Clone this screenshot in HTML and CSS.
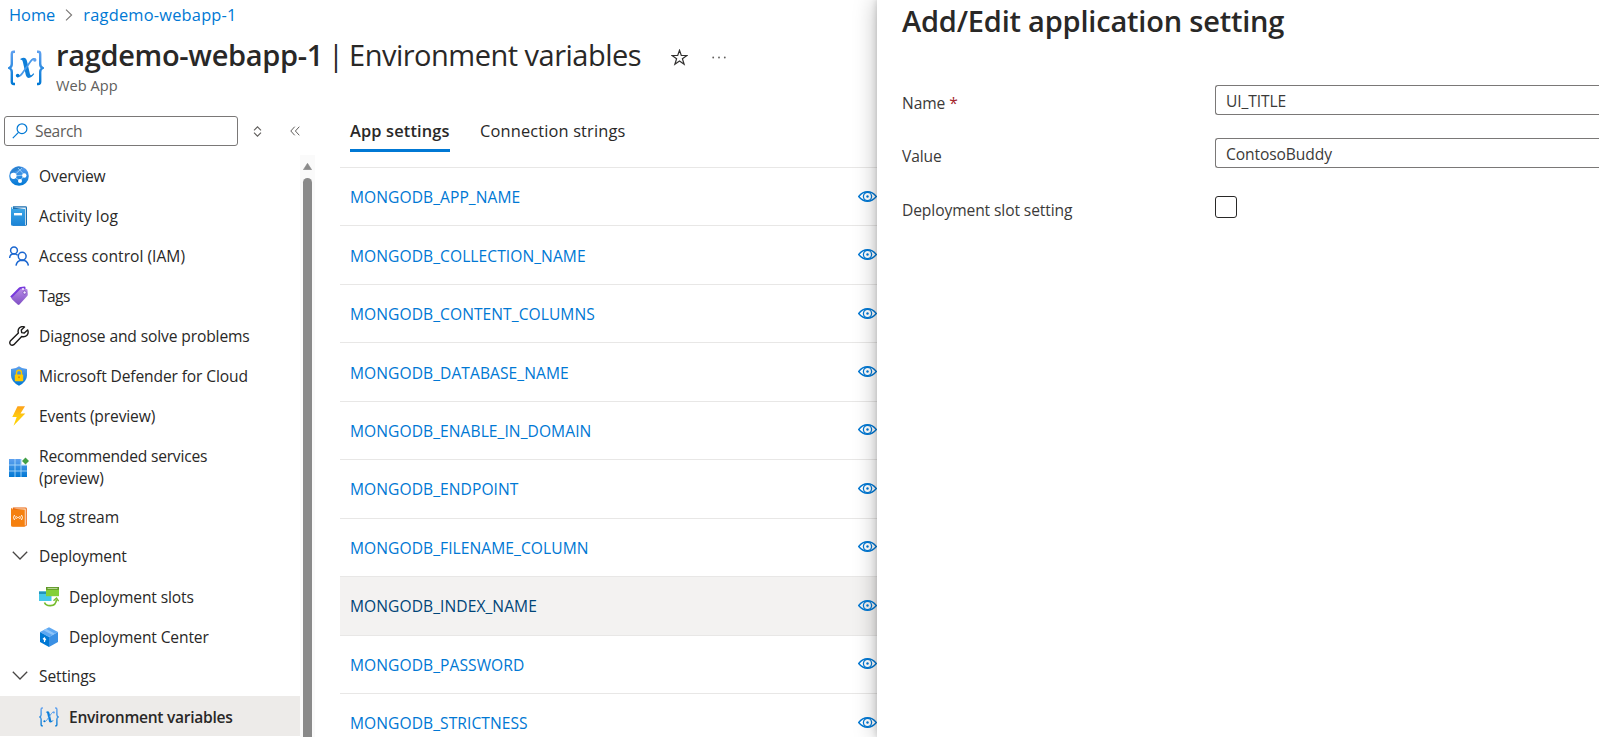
FILE: index.html
```html
<!DOCTYPE html>
<html lang="en">
<head>
<meta charset="utf-8">
<title>ragdemo-webapp-1 - Environment variables</title>
<link rel="stylesheet" href="styles.css">
</head>
<body>
<svg class="defs" width="0" height="0">
  <defs>
    <linearGradient id="blueV" x1="0" y1="0" x2="0" y2="1"><stop offset="0" stop-color="#5ea0ef"/><stop offset="1" stop-color="#0078d4"/></linearGradient>
    <linearGradient id="bookV" x1="0" y1="0" x2="0" y2="1"><stop offset="0" stop-color="#3fa9e8"/><stop offset="1" stop-color="#1a83d6"/></linearGradient>
    <linearGradient id="purpleV" x1="0" y1="0" x2="0" y2="1"><stop offset="0" stop-color="#b78be6"/><stop offset="1" stop-color="#7f4fc4"/></linearGradient>
    <linearGradient id="boltV" x1="0" y1="0" x2="0" y2="1"><stop offset="0" stop-color="#fea11b"/><stop offset=".5" stop-color="#fec90f"/><stop offset="1" stop-color="#ffd400"/></linearGradient>
    <symbol id="variables" viewBox="0 0 36 36">
      <g fill="none" stroke="url(#blueV)" stroke-width="2.4">
        <path d="M7 1.8H5.8Q3.8 1.8 3.8 4V14Q3.8 17 1.2 18Q3.8 19 3.8 22V31.8Q3.8 34 5.8 34H7"/>
        <path d="M29 1.8H30.2Q32.2 1.8 32.2 4V14Q32.2 17 34.8 18Q32.2 19 32.2 22V31.8Q32.2 34 30.2 34H29"/>
      </g>
      <path d="M12.5 8.8C16.5 6.800 18.3 8 19.2 12L21.8 23.5C22.4 26 23.6 25.8 25.3 23.3L26.2 24C23.8 27.8 19.3 30 17.8 25L15 12.5C14.5 10 13.8 9.5 12.5 9.8Z" fill="#0f7fd9"/>
      <path d="M27.5 9.5Q25 7.8 22.500 11.5L14.5 23Q11.5 27.5 8.8 26" fill="none" stroke="#4a9aea" stroke-width="1.700"/>
      <circle cx="26.8" cy="10" r="1.7" fill="#5ea0ef"/><circle cx="9.7" cy="25.6" r="1.8" fill="#0078d4"/>
    </symbol>
    <symbol id="eye" viewBox="0 0 19 11">
      <path d="M.7 5.5C3.5 2 6.300.8 9.5.8S15.5 2 18.3 5.5C15.5 9 12.7 10.2 9.5 10.2S3.5 9 .7 5.5Z" fill="none" stroke="#0078d4" stroke-width="1.4"/>
      <circle cx="9.5" cy="5.5" r="4.1" fill="none" stroke="#0078d4" stroke-width="1.3"/><circle cx="9.5" cy="5.5" r="1.2" fill="#0078d4"/>
    </symbol>
    <symbol id="chevron" viewBox="0 0 16 9"><path d="M.8.8L8 8L15.2.8" fill="none" stroke="#484644" stroke-width="1.3"/></symbol>
  </defs>
</svg>
<div class="portal">
  <div class="workspace">
    <nav class="breadcrumb">
      <a class="crumb-home">Home</a>
      <svg class="crumb-sep" width="8" height="12" viewBox="0 0 8 12"><path d="M1 .6L6.6 6L1 11.4" fill="none" stroke="#797775" stroke-width="1.1"/></svg>
      <a class="crumb-app">ragdemo-webapp-1</a>
    </nav>
    <header class="heading">
      <svg class="heading-icon" width="36" height="36"><use href="#variables"/></svg>
      <div class="heading-text">
        <h1><strong>ragdemo-webapp-1</strong><span class="bar">|</span><span class="page">Environment variables</span></h1>
        <p>Web App</p>
      </div>
      <svg class="star" width="17" height="17" viewBox="0 0 17 17"><path d="M8.5 1.3L10.3 6.5H15.9L11.4 9.8L13.1 15.2L8.5 11.9L3.9 15.2L5.6 9.8L1.1 6.5H6.7Z" fill="none" stroke="#323130" stroke-width="1.2"/></svg>
      <svg class="more" width="14" height="3" viewBox="0 0 14 3"><g fill="#605e5c"><circle cx="1.2" cy="1.5" r=".9"/><circle cx="7" cy="1.5" r=".9"/><circle cx="12.8" cy="1.5" r=".9"/></g></svg>
    </header>
    <div class="columns">
      <aside class="sidebar">
        <div class="tools">
          <div class="search">
            <svg width="16" height="16" viewBox="0 0 16 16"><g fill="none" stroke="#0078d4" stroke-width="1.2"><circle cx="10" cy="5.7" r="4.9"/><path d="M6.5 9.4L.8 15.2"/></g></svg>
            <span>Search</span>
          </div>
          <svg class="sort" width="9" height="11" viewBox="0 0 9 11"><path d="M1 4.3L4.5.8L8 4.3M1 6.7L4.5 10.2L8 6.7" fill="none" stroke="#605e5c" stroke-width="1.1"/></svg>
          <svg class="collapse" width="10" height="10" viewBox="0 0 10 10"><path d="M4.7.7L.8 5L4.7 9.3M9.3.7L5.4 5L9.3 9.3" fill="none" stroke="#605e5c" stroke-width="1"/></svg>
        </div>
        <div class="menu-area">
          <ul class="menu">
            <li><svg class="icon" viewBox="0 0 20 20"><circle cx="10" cy="10" r="9.8" fill="url(#blueV)"/><path d="M7 1Q2 4 1 8L7 5L14 2Q10-.5 7 1Z" fill="#2b82d0"/><path d="M4.500 10L15.500 9L11 15ZM4.500 10L13 2M15.500 9L9 2" fill="none" stroke="#9fd0f5" stroke-width=".9"/><circle cx="4.5" cy="9.8" r="3.1" fill="#fff"/><circle cx="15.3" cy="9.5" r="2.2" fill="#fff"/><circle cx="11" cy="15" r="2" fill="#fff"/></svg><span>Overview</span></li>
            <li><svg class="icon" viewBox="0 0 20 20"><path d="M4 .3H16.5Q18 .3 18 1.5V18.5Q18 19.7 16.5 19.7H4Z" fill="#1c6fb0"/><path d="M4 1.5H16.8V18.9H15V3Z" fill="#eaf4fb"/><path d="M3.5.8Q2 .8 2 2.2V18.3Q2 19.8 3.5 19.8H16V3H4Q2.5 3 3.5.8Z" fill="url(#bookV)"/><rect x="5" y="7" width="8" height="2.4" fill="#fff"/></svg><span class="activity">Activity log</span></li>
            <li><svg class="icon" viewBox="0 0 20 20"><g fill="none" stroke="#1a66d0" stroke-width="1.5"><circle cx="5" cy="4.4" r="3.4"/><circle cx="13.2" cy="10.2" r="3.9"/><path d="M.6 12Q1 8 4.8 7.8Q7 7.8 8.7 9.3M7 19.6Q7.8 14.3 13.2 14.2Q18.6 14.3 19.4 19.6"/></g></svg><span class="access">Access control (IAM)</span></li>
            <li><svg class="icon" viewBox="0 0 20 20"><path d="M1.2 10.5L9.8 1.7Q10.5 1 11.5 1L15.5.5Q16.5.6 16.5 1.5V6L7 16.5Z" fill="#773adc"/><path d="M3 11.5L11.5 3Q12 2.5 13 2.5L17.5 3Q18.5 3 18.5 4L18.8 8.5Q18.8 9.5 18 10.3L10.5 18.6Q9.5 19.5 8.6 18.6L2.8 13Q2.2 12.3 3 11.5Z" fill="url(#purpleV)"/><circle cx="15.6" cy="6.5" r="1.6" fill="#f1e7ff" stroke="#6535a8" stroke-width=".6"/><circle cx="14" cy="3" r="1.1" fill="#f1e7ff"/></svg><span class="tags">Tags</span></li>
            <li><svg class="icon" viewBox="0 0 20 20"><path d="M18.6 3.9L15.3 7L12.7 6.6L12.3 4L15.5 1Q12.800-.1 10.5 1.8Q8.4 4 9.4 7L1.3 15.1Q.2 16.8 1.4 18.4Q3 19.9 4.8 18.7L12.7 10.5Q15.8 11.4 18 9.2Q20 6.7 18.6 3.9Z" fill="none" stroke="#1b1a19" stroke-width="1.4" stroke-linejoin="round"/></svg><span>Diagnose and solve problems</span></li>
            <li><svg class="icon" viewBox="0 0 20 20"><path d="M2 3Q7 3 10 .3Q13 3 18 3V9.500Q18 15.500 10 19.800Q2 15.500 2 9.500Z" fill="url(#blueV)"/><path d="M7.500 9V6.800Q7.500 4.300 10 4.300T12.500 6.800V9" fill="none" stroke="#f5c400" stroke-width="1.4"/><rect x="5.8" y="8.4" width="8.4" height="6.8" rx=".7" fill="#ffca00"/><circle cx="10" cy="11.3" r="1" fill="#d79200"/></svg><span>Microsoft Defender for Cloud</span></li>
            <li><svg class="icon" viewBox="0 0 20 20"><path d="M8.5.3H16L11.5 7.5H16.3L4.5 19.7L7.7 11H3.3Z" fill="url(#boltV)"/></svg><span>Events (preview)</span></li>
            <li class="two-line"><svg class="icon" viewBox="0 0 20 20"><path d="M0 2H18V20H0Z" fill="url(#blueV)"/><path d="M6 2V20M12 2V20M0 8H18M0 14H18" stroke="#a8d8fa" stroke-width=".9"/><path d="M12.4 0H20V8H12.4Z" fill="#fff"/><path d="M12.400 8H18" stroke="#a8d8fa" stroke-width=".9"/><path d="M16.5.6L20 4.100L16.500 7.600L13 4.100Z" fill="#43a047"/></svg><span>Recommended services<br>(preview)</span></li>
            <li><svg class="icon" viewBox="0 0 20 20"><path d="M4 .5H16.500Q17.800.5 17.800 1.700V18Q17.800 19 16.500 19.300H4Z" fill="#e8620a"/><path d="M4 1.500H16.700V18.500H15V3Z" fill="#fff3e6"/><path d="M3.500.8Q2 .8 2 2.200V18.300Q2 19.800 3.500 19.800H15.800V2.400H4Q3 2 3.500.8Z" fill="#f5800f"/><g fill="none" stroke="#fff" stroke-width="1"><path d="M5.500 8Q3.600 10.500 5.500 13M7.300 9Q6.200 10.500 7.300 12M10.700 9Q11.800 10.500 10.700 12M12.500 8Q14.400 10.500 12.500 13"/></g><circle cx="9" cy="10.5" r=".8" fill="#fff"/></svg><span>Log stream</span></li>
            <li class="group"><svg class="chev"><use href="#chevron"/></svg><span>Deployment</span></li>
            <li class="child"><svg class="icon" viewBox="0 0 20 20"><rect x="0" y="4.5" width="12.5" height="9.5" fill="#45c8ea"/><rect x="0" y="4.5" width="12.5" height="2.5" fill="#2294ba"/><rect x="7" y="0" width="13" height="9.2" fill="#83d038"/><path d="M7 0H20V2.800H7Z" fill="#5e9624"/><path d="M8.500 1.400H18.500" stroke="#d9f0c0" stroke-width=".8"/><path d="M5.500 15.500Q7 19 11.500 18.700Q17 18.500 17.500 12.500" fill="none" stroke="#76bc2d" stroke-width="1.7"/><path d="M14.500 13.800L17.500 11L19.600 14.200" fill="none" stroke="#76bc2d" stroke-width="1.4"/></svg><span>Deployment slots</span></li>
            <li class="child"><svg class="icon" viewBox="0 0 20 20"><path d="M1 5L10 .2L19 5L10 10Z" fill="#5ea8f2"/><path d="M1 5L10 10V20L1 15Z" fill="#0078d4"/><path d="M19 5L10 10V20L19 15Z" fill="#3b90e4"/><path d="M4.500 3.200L13.500 8.100L16 6.700L7 1.800Z" fill="#8ec5fa"/><path d="M5.500 15V11.500M4 12.300L5.500 11L6.800 13.300" fill="none" stroke="#fff" stroke-width="1.2"/></svg><span>Deployment Center</span></li>
            <li class="group"><svg class="chev"><use href="#chevron"/></svg><span>Settings</span></li>
            <li class="child selected"><svg class="icon"><use href="#variables"/></svg><span>Environment variables</span></li>
          </ul>
          <div class="scrollbar"><svg width="9" height="7" viewBox="0 0 9 7"><path d="M4.500.3L8.600 6.700H.4Z" fill="#8a8a8a" stroke="#8a8a8a" stroke-width=".6" stroke-linejoin="round"/></svg><div class="thumb"></div></div>
        </div>
      </aside>
      <main class="content">
        <div class="tabs"><span class="tab active">App settings</span><span class="tab">Connection strings</span></div>
        <div class="rows">
          <div class="row"><a>MONGODB_APP_NAME</a><svg class="eye"><use href="#eye"/></svg></div>
          <div class="row"><a>MONGODB_COLLECTION_NAME</a><svg class="eye"><use href="#eye"/></svg></div>
          <div class="row"><a>MONGODB_CONTENT_COLUMNS</a><svg class="eye"><use href="#eye"/></svg></div>
          <div class="row"><a>MONGODB_DATABASE_NAME</a><svg class="eye"><use href="#eye"/></svg></div>
          <div class="row"><a>MONGODB_ENABLE_IN_DOMAIN</a><svg class="eye"><use href="#eye"/></svg></div>
          <div class="row"><a>MONGODB_ENDPOINT</a><svg class="eye"><use href="#eye"/></svg></div>
          <div class="row"><a>MONGODB_FILENAME_COLUMN</a><svg class="eye"><use href="#eye"/></svg></div>
          <div class="row hovered"><a>MONGODB_INDEX_NAME</a><svg class="eye"><use href="#eye"/></svg></div>
          <div class="row"><a>MONGODB_PASSWORD</a><svg class="eye"><use href="#eye"/></svg></div>
          <div class="row"><a>MONGODB_STRICTNESS</a><svg class="eye"><use href="#eye"/></svg></div>
        </div>
      </main>
    </div>
  </div>
  <section class="panel">
    <h2>Add/Edit application setting</h2>
    <div class="field"><label>Name <span class="required">*</span></label><div class="input">UI_TITLE</div></div>
    <div class="field"><label>Value</label><div class="input">ContosoBuddy</div></div>
    <div class="field slot"><label>Deployment slot setting</label><div class="checkbox"></div></div>
  </section>
</div>
</body>
</html>
```
FILE: styles.css
```css
* { box-sizing: border-box; }
body { margin: 0; width: 1599px; height: 737px; overflow: hidden; background: #fff; color: #292827; font: 15.6px/22px "Open Sans", "Noto Sans", sans-serif; }
h1, h2, p, ul { margin: 0; padding: 0; font-weight: 400; }
a { color: #0078d4; }
svg { display: block; flex: none; }
.defs { position: absolute; }
.portal { display: flex; height: 737px; }
.workspace { width: 877px; flex: none; height: 737px; overflow: hidden; }
.breadcrumb { display: flex; align-items: center; height: 30px; padding-left: 9px; font-size: 16.4px; }
.crumb-app { letter-spacing: .21px; }
.crumb-sep { margin: 0 10px; }
.heading { display: flex; height: 84px; padding-left: 8px; }
.heading-icon { margin-top: 20px; }
.heading-text { margin-left: 12px; width: 595px; }
h1 { display: flex; font-size: 29px; line-height: 50px; white-space: nowrap; }
h1 strong { font-weight: 600; letter-spacing: -.32px; }
.bar { width: 26px; text-align: center; }
.page { letter-spacing: -.5px; }
p { font-size: 14.6px; line-height: 20px; color: #605e5c; margin-top: -5px; letter-spacing: .05px; }
.star { margin: 19px 0 0 20px; }
.more { margin: 26px 0 0 24px; }
.columns { display: flex; height: 623px; }
.sidebar { width: 340px; flex: none; }
.tools { display: flex; align-items: center; height: 41px; padding: 2px 0 9px 4px; }
.search { display: flex; align-items: center; width: 234px; height: 30px; border: 1px solid #7a7877; border-radius: 3px; padding-left: 7px; gap: 7px; color: #605e5c; letter-spacing: -.35px; }
.sort { margin-left: 15px; }
.collapse { margin-left: 28px; }
.menu-area { display: flex; height: 582px; }
.menu { list-style: none; width: 300px; padding-top: 1px; white-space: nowrap; letter-spacing: -.13px; }
li { display: flex; align-items: center; height: 40px; padding-left: 9px; }
.activity { letter-spacing: .1px; }
.access { letter-spacing: .02px; }
.tags { letter-spacing: -.6px; }
.icon { width: 20px; height: 20px; margin-right: 10px; }
.two-line { height: 61px; letter-spacing: -.2px; }
.group { height: 39px; }
.group + .child { margin-top: 1px; }
.chev { width: 16px; height: 9px; margin: 0 11px 0 3px; }
.group span { margin-top: -1px; }
.group .chev { margin-top: -2px; }
.child { padding-left: 39px; }
.selected { background: #edebe9; font-weight: 600; letter-spacing: -.29px; }
.group + .selected { margin-top: 0; padding-top: 1px; }
.scrollbar { width: 15px; background: #fafafa; padding: 8px 3px 0; display: flex; flex-direction: column; gap: 8px; }
.thumb { flex: 1; background: #8a8a8a; border-radius: 5px 5px 0 0; }
.content { flex: 1; }
.tabs { display: flex; gap: 30px; padding-left: 10px; height: 53px; font-size: 16.4px; }
.tab { height: 38px; padding-top: 6px; white-space: nowrap; letter-spacing: .15px; }
.active { font-weight: 600; border-bottom: 3px solid #0078d4; width: 100px; }
.row { display: flex; align-items: center; justify-content: space-between; height: 58.45px; border-top: 1px solid #e8e7e6; padding-left: 10px; letter-spacing: .06px; }
.row a { padding-top: 1px; }
.eye { width: 19px; height: 11px; margin-bottom: 1px; }
.hovered { background: #f3f2f1; }
.hovered a { color: #004578; }
.panel { flex: 1; background: #fff; box-shadow: 0 0 22px rgba(0,0,0,.28), 0 0 6px rgba(0,0,0,.16); padding-left: 25px; z-index: 1; color: #3b3a39; letter-spacing: -.1px; }
h2 { font-size: 29px; line-height: 40px; font-weight: 600; color: #292827; height: 85px; letter-spacing: -.2px; padding-top: 1px; }
.field { display: flex; height: 53px; }
label { width: 313px; padding-top: 7px; }
.slot label { padding-top: 8px; }
.required { color: #a4262c; }
.input { flex: 1; height: 30px; border: 1px solid #7a7877; border-right: 0; border-radius: 3px 0 0 3px; padding: 4px 0 0 10px; }
.checkbox { width: 22px; height: 22px; margin-top: 5px; border: 1px solid #292827; border-radius: 3px; }
```
